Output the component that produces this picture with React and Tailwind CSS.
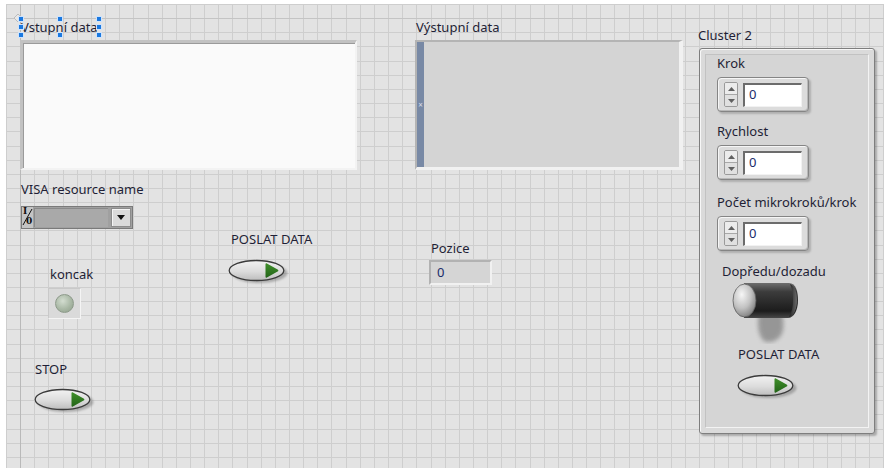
import React, { useId } from "react";

const FONT = "font-['Noto_Sans','Open_Sans',sans-serif]";

// panel grid geometry
const GRID_X0 = 6;
const GRID_Y0 = 4;
const STEP = 14.15;
const COLS = Array.from({ length: 63 }, (_, k) => Math.round(GRID_X0 + STEP * k) + 0.5);
const ROWS = Array.from({ length: 33 }, (_, k) => Math.round(GRID_Y0 + STEP * k) + 0.5);

function PanelGrid() {
  return (
    <svg className="absolute inset-0" width="884" height="468" viewBox="0 0 884 468" shapeRendering="crispEdges">
      <rect x={GRID_X0} y={GRID_Y0} width={884 - GRID_X0} height={468 - GRID_Y0} fill="#e3e3e3" />
      {COLS.map((x) => (
        <line key={`c${x}`} x1={x} y1={GRID_Y0} x2={x} y2="468" stroke="#cecece" strokeWidth="1" />
      ))}
      {ROWS.map((y) => (
        <line key={`r${y}`} x1={GRID_X0} y1={y} x2="884" y2={y} stroke="#cecece" strokeWidth="1" />
      ))}
      {/* origin axes */}
      <line x1="20.5" y1={GRID_Y0} x2="20.5" y2="468" stroke="#b9b9b9" strokeWidth="1" />
      <line x1={GRID_X0} y1="18.5" x2="884" y2="18.5" stroke="#c4c4c4" strokeWidth="1" />
      <path d="M18 14 L22 18 L18 22 L14 18 Z" fill="#e8e8e8" stroke="#bcbcbc" strokeWidth="1" shapeRendering="auto" />
    </svg>
  );
}

function Label({ children, className = "" }) {
  return (
    <div className={`text-[13px] leading-[16px] text-[#1f1f36] whitespace-nowrap ${className}`}>
      {children}
    </div>
  );
}

// Oval boolean push button with a green "play" lamp
function OkButton() {
  const id = useId().replace(/:/g, "");
  return (
    <svg width="64" height="27" viewBox="0 0 64 27" className="block">
      <defs>
        <linearGradient id={`body${id}`} x1="0" y1="0" x2="0" y2="1">
          <stop offset="0" stopColor="#f2f2f2" />
          <stop offset="0.55" stopColor="#dcdcdc" />
          <stop offset="1" stopColor="#bdbdbd" />
        </linearGradient>
        <linearGradient id={`lamp${id}`} x1="0" y1="0" x2="0" y2="1">
          <stop offset="0" stopColor="#3f8f2a" />
          <stop offset="1" stopColor="#236418" />
        </linearGradient>
        <filter id={`sh${id}`} x="-20%" y="-40%" width="140%" height="180%">
          <feGaussianBlur stdDeviation="1.3" />
        </filter>
      </defs>
      <ellipse cx="31.5" cy="14" rx="28" ry="10" fill="#7a7a7a" opacity="0.55" filter={`url(#sh${id})`} />
      <ellipse cx="28.5" cy="11.5" rx="27.3" ry="10" fill={`url(#body${id})`} stroke="#3b3b3b" strokeWidth="1.3" />
      <path d="M37.5 5.2 C37.5 4.4 38.2 4.1 38.9 4.5 L49.6 10.4 C50.6 11 50.6 12 49.6 12.6 L38.9 18.5 C38.2 18.9 37.5 18.6 37.5 17.8 Z" fill={`url(#lamp${id})`} />
    </svg>
  );
}

// Numeric control with up/down incrementer
function NumericControl() {
  return (
    <div className="flex items-center gap-[5px] w-[92px] h-[35px] rounded-[4px] border border-[#858585] bg-[#dcdcdc] pl-[6px] shadow-[inset_1px_1px_0_#f6f6f6,inset_-1px_-1px_0_#b8b8b8,2px_2px_2px_rgba(0,0,0,0.18)]">
      <div className="flex flex-col w-[14px] h-[25px] rounded-[2px] border border-[#9a9a9a] bg-[#e4e4e4] overflow-hidden">
        <div className="flex-1 flex items-center justify-center border-b border-[#a8a8a8] bg-[#ececec]">
          <svg width="7" height="4" viewBox="0 0 7 4"><path d="M0 4 L3.5 0 L7 4Z" fill="#606060" /></svg>
        </div>
        <div className="flex-1 flex items-center justify-center bg-[#e0e0e0]">
          <svg width="7" height="4" viewBox="0 0 7 4"><path d="M0 0 L3.5 4 L7 0Z" fill="#606060" /></svg>
        </div>
      </div>
      <div className="flex items-center w-[59px] h-[24px] bg-white border-t-2 border-l-2 border-t-[#6c6c6c] border-l-[#6c6c6c] border-b border-r border-b-[#f2f2f2] border-r-[#f2f2f2] pl-[4px] text-[13px] text-[#1b2c6a]">
        0
      </div>
    </div>
  );
}

// Lever toggle switch seen from the side, with its soft shadow below
function ToggleSwitch() {
  const id = useId().replace(/:/g, "");
  return (
    <svg width="68" height="62" viewBox="0 0 68 62" className="block">
      <defs>
        <linearGradient id={`lev${id}`} x1="0" y1="0" x2="0" y2="1">
          <stop offset="0" stopColor="#6e6e6e" />
          <stop offset="0.25" stopColor="#3c3c3c" />
          <stop offset="0.8" stopColor="#1c1c1c" />
          <stop offset="1" stopColor="#484848" />
        </linearGradient>
        <radialGradient id={`knob${id}`} cx="0.38" cy="0.32" r="0.75">
          <stop offset="0" stopColor="#f6f6f6" />
          <stop offset="0.55" stopColor="#c2c2c2" />
          <stop offset="1" stopColor="#7a7a7a" />
        </radialGradient>
        <linearGradient id={`end${id}`} x1="0" y1="0" x2="1" y2="0">
          <stop offset="0" stopColor="#1e1e1e" />
          <stop offset="1" stopColor="#6a6a6a" />
        </linearGradient>
        <filter id={`blr${id}`} x="-50%" y="-50%" width="200%" height="200%">
          <feGaussianBlur stdDeviation="2.2" />
        </filter>
      </defs>
      <path d="M27 30 C25 42 26 54 32 59 C39 62 49 58 51 48 C52 40 51 34 49 30 Z" fill="#8c8c8c" opacity="0.85" filter={`url(#blr${id})`} />
      <path d="M12 1 L57 1 C64 1 66 10 66 18 C66 28 62 36 56 36 L12 36 Z" fill={`url(#lev${id})`} />
      <path d="M58 2 C63 4 65 11 65 18 C65 27 62 34 57 35 C60 30 61 24 61 18 C61 11 60 6 58 2 Z" fill={`url(#end${id})`} />
      <ellipse cx="12.5" cy="18.5" rx="11.5" ry="16.5" fill={`url(#knob${id})`} />
      <ellipse cx="12.5" cy="18.5" rx="11.5" ry="16.5" fill="none" stroke="#5e5e5e" strokeWidth="0.8" />
    </svg>
  );
}

// Blue grab handles around the selected label
function SelectionHandles() {
  const spots = [
    [-2, -2], [37, -2], [76, -2],
    [-2, 6], [76, 6],
    [-2, 14], [37, 14], [76, 14],
  ];
  return (
    <>
      {spots.map(([x, y], i) => (
        <span
          key={i}
          className="absolute w-[4px] h-[4px] bg-[#1a78e0] outline outline-1 outline-[#cfe3fb]"
          style={{ left: x, top: y }}
        />
      ))}
    </>
  );
}

export default function App() {
  return (
    <div className={`relative w-[884px] h-[468px] overflow-hidden bg-white ${FONT}`}>
      <PanelGrid />

      <div className="relative flex items-start pl-[20px] pt-[19px]">
        {/* left column */}
        <div className="flex flex-col w-[337px]">
          <div className="relative self-start ml-[1px]">
            <Label>Vstupní data</Label>
            <SelectionHandles />
          </div>
          <div className="mt-[5px] h-[130px] border-t-[3px] border-l-[3px] border-t-[#c2c2c2] border-l-[#c2c2c2] border-b-2 border-r-2 border-b-[#f3f3f3] border-r-[#f3f3f3] bg-[#fafafa] shadow-[inset_1px_1px_0_#9a9a9a]" />

          <Label className="mt-[11px] ml-[1px]">VISA resource name</Label>
          <div className="mt-[9px] ml-[1px] w-[112px] h-[23px] flex items-stretch bg-[#a0a0a0] border border-[#7a7a7a]">
            <div className="relative w-[11px] bg-[#c4c4c4] text-[#111] font-['DejaVu_Serif',serif]">
              <span className="absolute left-[1px] top-[-1px] text-[9px] leading-[10px] font-bold">I</span>
              <span className="absolute left-[4px] top-[9px] text-[9px] leading-[10px] font-bold">0</span>
              <svg className="absolute left-0 top-0" width="11" height="21" viewBox="0 0 11 21">
                <line x1="10" y1="2" x2="1" y2="18" stroke="#111" strokeWidth="1" />
              </svg>
            </div>
            <div className="flex-1 ml-[1px] my-[1px] bg-[#a9a9a9] border-t border-l border-[#8a8a8a]" />
            <div className="w-[20px] m-[1px] ml-[3px] bg-[#dadada] border border-[#8c8c8c] flex items-center justify-center shadow-[inset_1px_1px_0_#f4f4f4]">
              <svg width="8" height="5" viewBox="0 0 8 5"><path d="M0 0 L8 0 L4 5Z" fill="#111" /></svg>
            </div>
          </div>

          <div className="mt-[2px] flex items-start">
            {/* limit switch LED and stop button */}
            <div className="flex flex-col items-start w-[100px]">
              <Label className="mt-[35px] ml-[30px]">koncak</Label>
              <div className="mt-[6px] ml-[28px] w-[33px] h-[31px] bg-[#dadada] border border-t-[#c9c9c9] border-l-[#c9c9c9] border-b-[#f4f4f4] border-r-[#f4f4f4] flex items-center justify-center">
                <div className="w-[19px] h-[19px] rounded-full border border-[#8d9a8a] bg-[radial-gradient(circle_at_40%_35%,#d3ddd0_0%,#a9b8a5_55%,#8d9d89_100%)]" />
              </div>
              <Label className="mt-[42px] ml-[15px]">STOP</Label>
              <div className="mt-[11px] ml-[14px]"><OkButton /></div>
            </div>
            {/* send button */}
            <div className="flex flex-col items-start ml-[108px]">
              <Label className="ml-[3px]">POSLAT DATA</Label>
              <div className="mt-[12px]"><OkButton /></div>
            </div>
          </div>
        </div>

        {/* middle column */}
        <div className="flex flex-col ml-[58px] w-[268px]">
          <Label className="ml-[1px]">Výstupní data</Label>
          <div className="mt-[5px] h-[130px] flex border-t-[2px] border-l-[2px] border-t-[#b4b4b4] border-l-[#b4b4b4] border-b-[3px] border-r-[4px] border-b-[#f1f1f1] border-r-[#f1f1f1] bg-[#d4d4d4]">
            <div className="w-[7px] h-full bg-[#7889a5] flex items-center justify-center text-[8px] leading-none text-[#d8deea]">×</div>
          </div>
          <Label className="mt-[70px] ml-[16px]">Pozice</Label>
          <div className="mt-[4px] ml-[14px] w-[63px] h-[25px] flex items-center pl-[6px] bg-[#d5d5d5] border-t-2 border-l-2 border-t-[#b2b2b2] border-l-[#b2b2b2] border-b-2 border-r-2 border-b-[#f1f1f1] border-r-[#f1f1f1] text-[13px] text-[#1b2c6a]">
            0
          </div>
        </div>

        {/* Cluster 2 */}
        <div className="flex flex-col ml-[15px]">
          <Label className="mt-[8px]">Cluster 2</Label>
          <div className="mt-[5px] ml-[1px] w-[176px] h-[386px] rounded-[3px] border border-[#7e7e7e] bg-[#dadada] p-[5px] shadow-[inset_1px_1px_0_#f7f7f7,2px_2px_2px_rgba(0,0,0,0.25)]">
            <div className="h-full border border-t-[#c2c2c2] border-l-[#c2c2c2] border-b-[#f3f3f3] border-r-[#f3f3f3] bg-[#d5d5d5] pl-[11px] flex flex-col items-start">
              <Label>Krok</Label>
              <div className="mt-[6px]"><NumericControl /></div>
              <Label className="mt-[11px]">Rychlost</Label>
              <div className="mt-[6px]"><NumericControl /></div>
              <Label className="mt-[14px]">Počet mikrokroků/krok</Label>
              <div className="mt-[6px]"><NumericControl /></div>
              <Label className="mt-[12px] ml-[5px]">Dopředu/dozadu</Label>
              <div className="mt-[3px] ml-[15px]"><ToggleSwitch /></div>
              <Label className="mt-[2px] ml-[21px]">POSLAT DATA</Label>
              <div className="mt-[12px] ml-[20px]"><OkButton /></div>
            </div>
          </div>
        </div>
      </div>
    </div>
  );
}
